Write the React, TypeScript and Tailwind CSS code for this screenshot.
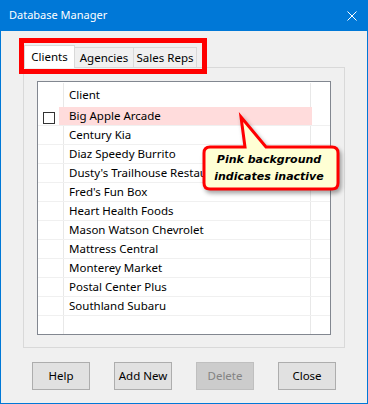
import React from 'react';

const clients = [
  'Big Apple Arcade',
  'Century Kia',
  'Diaz Speedy Burrito',
  "Dusty's Trailhouse Restaurant",
  "Fred's Fun Box",
  'Heart Health Foods',
  'Mason Watson Chevrolet',
  'Mattress Central',
  'Monterey Market',
  'Postal Center Plus',
  'Southland Subaru',
];

const inactive = ['Big Apple Arcade'];

function Row({ name }: { name: string }) {
  if (inactive.includes(name)) {
    return (
      <div className="flex h-[19px] border-b border-[#f0f0f0]">
        <div className="w-[21px] flex-shrink-0">
          <div className="ml-[5px] mt-[5px] h-[12px] w-[12px] border border-[#333333] bg-white" />
        </div>
        <div className="flex w-[253px] flex-shrink-0 items-center overflow-hidden whitespace-nowrap bg-[#ffdcdc] pl-[10px]">
          {name}
        </div>
        <div className="flex-1" />
      </div>
    );
  }
  return (
    <div className="flex h-[19px] border-b border-[#f0f0f0]">
      <div className="w-[26px] flex-shrink-0 border-r border-[#e8e8e8]" />
      <div className="flex w-[247px] flex-shrink-0 items-center overflow-hidden whitespace-nowrap border-r border-[#e8e8e8] pl-[5px]">
        {name}
      </div>
      <div className="flex-1" />
    </div>
  );
}

function Button({ label, disabled = false }: { label: string; disabled?: boolean }) {
  return (
    <button
      disabled={disabled}
      className={
        disabled
          ? 'flex h-[28px] w-[58px] items-center justify-center border border-[#bfbfbf] bg-[#cccccc] text-[#838383]'
          : 'flex h-[28px] w-[58px] items-center justify-center border border-[#adadad] bg-[#e1e1e1] text-black'
      }
    >
      {label}
    </button>
  );
}

export default function App() {
  return (
    <div className="relative h-[404px] w-[368px] border-x border-b border-[#0078d7] bg-[#f0f0f0] font-['Noto_Sans',sans-serif] text-[11.5px] text-black">
      {/* title bar */}
      <div className="flex h-[31px] items-center justify-between bg-[#0078d7] pl-[8px] pr-[10px] text-[11px] text-white">
        <span>Database Manager</span>
        <svg width="10" height="10" viewBox="0 0 10 10">
          <path d="M0.5 0.5 L9.5 9.5 M9.5 0.5 L0.5 9.5" stroke="white" strokeWidth="1" />
        </svg>
      </div>

      <div className="pl-[22px] pt-[14px]">
        {/* tabs */}
        <div className="ml-[1px] flex h-[22px] items-end">
          <div className="relative z-10 -mb-[1px] flex h-[23px] w-[51px] items-center justify-center border-x border-t border-[#d9d9d9] bg-white">
            Clients
          </div>
          <div className="flex h-[20px] w-[59px] items-center justify-center border-r border-t border-[#d9d9d9]">
            Agencies
          </div>
          <div className="flex h-[20px] w-[63px] items-center justify-center border-r border-t border-[#d9d9d9]">
            Sales Reps
          </div>
        </div>

        {/* tab page */}
        <div className="w-[322px] border border-[#d9d9d9] px-[13px] pb-[12px] pt-[13px]">
          <div className="flex h-[254px] w-[294px] flex-col border border-[#828790] bg-white">
            <div className="flex h-[25px] flex-shrink-0">
              <div className="mt-[1px] w-[26px] flex-shrink-0 border-r border-[#e8e8e8]" />
              <div className="mt-[1px] flex w-[247px] flex-shrink-0 items-center border-r border-[#e8e8e8] pl-[5px]">
                Client
              </div>
              <div className="flex-1" />
            </div>
            {clients.map((c) => (
              <Row key={c} name={c} />
            ))}
            <div className="flex flex-1">
              <div className="w-[26px] flex-shrink-0 border-r border-[#e8e8e8]" />
              <div className="w-[247px] flex-shrink-0 border-r border-[#e8e8e8]" />
              <div className="flex-1" />
            </div>
          </div>
        </div>

        {/* buttons */}
        <div className="ml-[9px] mt-[14px] flex gap-[24px]">
          <Button label="Help" />
          <Button label="Add New" />
          <Button label="Delete" disabled />
          <Button label="Close" />
        </div>
      </div>

      {/* red highlight round the tabs */}
      <div className="pointer-events-none absolute left-[18px] top-[38px] h-[36px] w-[188px] border-[5px] border-[#ff0000]" />

      {/* callout */}
      <div className="pointer-events-none absolute left-[195px] top-[110px] h-[85px] w-[150px]">
        <svg
          width="150"
          height="85"
          viewBox="0 0 150 85"
          className="absolute left-0 top-0 drop-shadow-[2px_3px_2px_rgba(0,0,0,0.35)]"
        >
          <path
            d="M14 37 L49 37 L45 7 L70 37 L136 37 Q142 37 142 43 L142 73 Q142 79 136 79 L14 79 Q8 79 8 73 L8 43 Q8 37 14 37 Z"
            fill="#ffffd4"
            stroke="#ff0000"
            strokeWidth="3"
            strokeLinejoin="miter"
          />
        </svg>
        <div className="absolute left-[8px] top-[37px] flex h-[42px] w-[134px] flex-col items-center justify-center pr-[4px] font-['DejaVu_Sans',sans-serif] text-[11px] font-bold italic leading-[17px] text-black">
          <span>Pink background</span>
          <span>indicates inactive</span>
        </div>
      </div>
    </div>
  );
}
